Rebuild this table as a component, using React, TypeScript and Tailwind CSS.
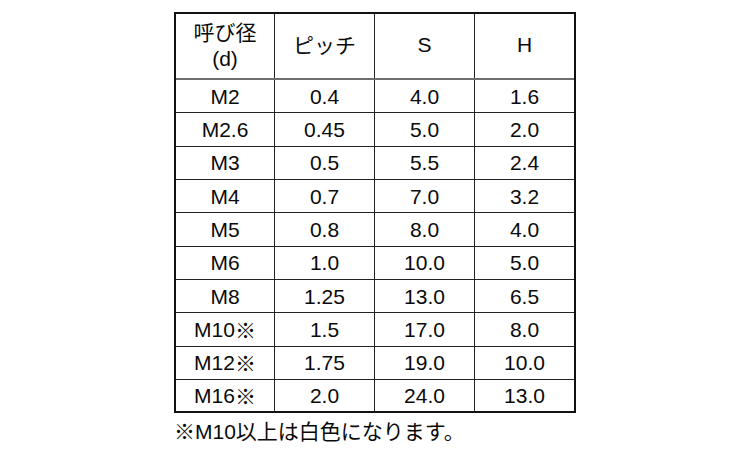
import React from "react";

const rows: [string, string, string, string][] = [
  ["M2", "0.4", "4.0", "1.6"],
  ["M2.6", "0.45", "5.0", "2.0"],
  ["M3", "0.5", "5.5", "2.4"],
  ["M4", "0.7", "7.0", "3.2"],
  ["M5", "0.8", "8.0", "4.0"],
  ["M6", "1.0", "10.0", "5.0"],
  ["M8", "1.25", "13.0", "6.5"],
  ["M10※", "1.5", "17.0", "8.0"],
  ["M12※", "1.75", "19.0", "10.0"],
  ["M16※", "2.0", "24.0", "13.0"],
];

const font = { fontFamily: '"Liberation Sans", "Noto Sans CJK JP", sans-serif' };
const cjk = { fontFamily: '"Noto Sans CJK JP", sans-serif' };

function Mark({ text }: { text: string }) {
  const i = text.indexOf("※");
  if (i < 0) return <>{text}</>;
  return (
    <>
      {text.slice(0, i)}
      <span style={cjk}>※</span>
    </>
  );
}

export default function App() {
  return (
    <div className="w-[750px] h-[450px] bg-white text-[#0a0a0a] text-[21px]" style={font}>
      <div className="w-[402px] ml-[174px] pt-[12px]">
        <div className="border-2 border-[#111]">
          <div className="grid grid-cols-[99px_100px_100px_99px] h-[66px] border-b-2 border-[#6e6e6e]">
            <div className="flex flex-col items-center justify-center border-r border-[#222] pb-[3px]">
              <span style={cjk} className="leading-[28px]">呼び径</span>
              <span className="leading-[28px]">(d)</span>
            </div>
            <div className="flex items-center justify-center border-r border-[#222] pb-[2px]">
              <span style={cjk}>ピッチ</span>
            </div>
            <div className="flex items-center justify-center border-r border-[#222] pb-[2px]">S</div>
            <div className="flex items-center justify-center pb-[2px]">H</div>
          </div>
          {rows.map((r, idx) => (
            <div
              key={r[0]}
              className={
                idx === rows.length - 1
                  ? "grid grid-cols-[99px_100px_100px_99px] h-[31px]"
                  : "grid grid-cols-[99px_100px_100px_99px] h-[33.33px] border-b border-[#222]"
              }
            >
              {r.map((c, j) => (
                <div
                  key={j}
                  className={
                    j < 3
                      ? "flex items-center justify-center border-r border-[#222] leading-none"
                      : "flex items-center justify-center leading-none"
                  }
                >
                  <Mark text={c} />
                </div>
              ))}
            </div>
          ))}
        </div>
        <div className="mt-[3px] leading-[28px] whitespace-nowrap">
          <span style={cjk}>※</span>M10
          <span style={cjk}>以上は白色になります。</span>
        </div>
      </div>
    </div>
  );
}
